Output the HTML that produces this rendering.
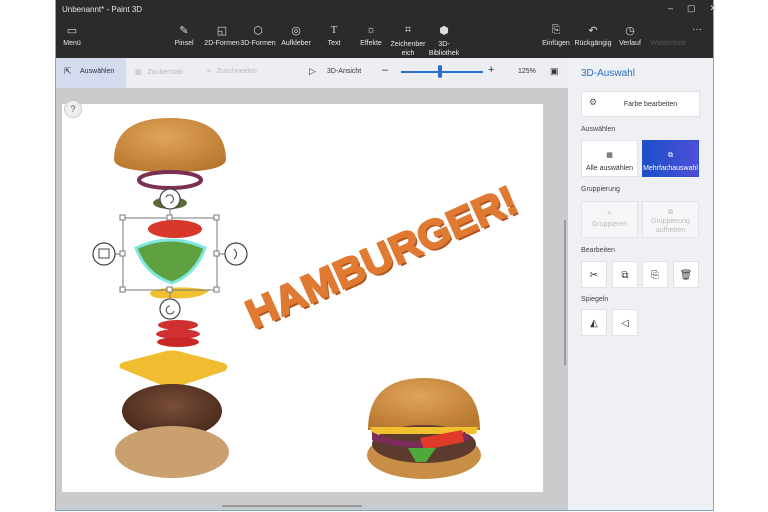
<!DOCTYPE html>
<html><head><meta charset="utf-8"><style>
*{margin:0;padding:0;box-sizing:border-box}
body{width:768px;height:512px;background:#fff;position:relative;overflow:hidden;font-family:"Liberation Sans",sans-serif}
.a{position:absolute}
.t{color:#e8e8e8;font-size:7px;text-align:center}
.ic{color:#ddd;font-size:11px;text-align:center}
.pb{position:absolute;background:#fff;border:1px solid #e2e2e6;font-size:7px;color:#333;text-align:center}
.dis{color:#bbb;background:#f6f6f8}
.lbl{position:absolute;font-size:7px;color:#444;left:581px}
</style></head><body>
<div class="a" style="left:55px;top:0;width:659px;height:511px;border:1px solid #7aa9c9;background:#c9cbcc"></div>
<div class="a" style="left:56px;top:0;width:657px;height:58px;background:#2b2b2b"></div>
<div class="a" style="left:62px;top:5px;color:#e6e6e6;font-size:8px">Unbenannt* - Paint 3D</div>
<div class="a" style="left:668px;top:3px;color:#ddd;font-size:9px;letter-spacing:14px">–▢✕</div>
<div class="a ic" style="left:62px;top:24px;width:20px">▭</div><div class="a t" style="left:60px;top:40px;width:24px">Menü</div>
<div class="a ic" style="left:174px;top:24px;width:20px">✎</div><div class="a t" style="left:170px;top:40px;width:28px">Pinsel</div>
<div class="a ic" style="left:212px;top:24px;width:20px">◱</div><div class="a t" style="left:202px;top:40px;width:40px">2D-Formen</div>
<div class="a ic" style="left:248px;top:24px;width:20px">⬡</div><div class="a t" style="left:238px;top:40px;width:40px">3D-Formen</div>
<div class="a ic" style="left:286px;top:24px;width:20px">◎</div><div class="a t" style="left:279px;top:40px;width:34px">Aufkleber</div>
<div class="a ic" style="left:324px;top:24px;width:20px;font-family:'Liberation Serif'">T</div><div class="a t" style="left:322px;top:40px;width:24px">Text</div>
<div class="a ic" style="left:361px;top:24px;width:20px">☼</div><div class="a t" style="left:357px;top:40px;width:28px">Effekte</div>
<div class="a ic" style="left:398px;top:24px;width:20px">⌗</div><div class="a t" style="left:388px;top:40px;width:40px;line-height:9px">Zeichenber<br>eich</div>
<div class="a ic" style="left:434px;top:24px;width:20px">⬢</div><div class="a t" style="left:426px;top:40px;width:36px;line-height:9px">3D-<br>Bibliothek</div>
<div class="a ic" style="left:546px;top:24px;width:20px">⎘</div><div class="a t" style="left:540px;top:40px;width:32px">Einfügen</div>
<div class="a ic" style="left:583px;top:24px;width:20px">↶</div><div class="a t" style="left:573px;top:40px;width:40px">Rückgängig</div>
<div class="a ic" style="left:620px;top:24px;width:20px">◷</div><div class="a t" style="left:614px;top:40px;width:32px">Verlauf</div>
<div class="a t" style="left:648px;top:40px;width:40px;color:#555">Wiederhole</div>
<div class="a" style="left:692px;top:24px;color:#ddd;font-size:10px">···</div>
<div class="a" style="left:56px;top:58px;width:512px;height:30px;background:#eceef2"></div>
<div class="a" style="left:56px;top:58px;width:70px;height:30px;background:#d4dbef"></div>
<div class="a" style="left:64px;top:66px;font-size:9px;color:#333">⇱</div>
<div class="a" style="left:80px;top:68px;font-size:7px;color:#234">Auswählen</div>
<div class="a" style="left:135px;top:68px;font-size:7px;color:#bbb">▦ &nbsp; Zauberstab</div>
<div class="a" style="left:207px;top:68px;font-size:7px;color:#bbb">⌗ &nbsp; Zuschneiden</div>
<div class="a" style="left:309px;top:66px;font-size:9px;color:#333">▷</div>
<div class="a" style="left:327px;top:68px;font-size:7px;color:#333">3D-Ansicht</div>
<div class="a" style="left:382px;top:64px;font-size:11px;color:#333">–</div>
<div class="a" style="left:401px;top:71px;width:82px;height:2px;background:#2d6fcf"></div>
<div class="a" style="left:438px;top:65px;width:4px;height:13px;border-radius:2px;background:#2d6fcf"></div>
<div class="a" style="left:488px;top:64px;font-size:11px;color:#333">+</div>
<div class="a" style="left:518px;top:68px;font-size:7px;color:#333">125%</div>
<div class="a" style="left:550px;top:66px;font-size:9px;color:#333">▣</div>
<div class="a" style="left:568px;top:58px;width:145px;height:452px;background:#eff0f4"></div>
<div class="a" style="left:581px;top:68px;font-size:10px;color:#2a6fc0">3D-Auswahl</div>
<div class="pb" style="left:581px;top:91px;width:119px;height:26px;line-height:26px;padding-left:20px">Farbe bearbeiten</div>
<div class="a" style="left:589px;top:97px;font-size:9px;color:#555">⚙</div>
<div class="lbl" style="top:126px">Auswählen</div>
<div class="pb" style="left:581px;top:140px;width:57px;height:37px;padding-top:8px;line-height:13px">▦<br>Alle auswählen</div>
<div class="pb" style="left:642px;top:140px;width:57px;height:37px;padding-top:8px;line-height:13px;background:linear-gradient(90deg,#1b4fc8,#4e4fd8);color:#fff;border-color:#2d4fd0">⧉<br>Mehrfachauswahl</div>
<div class="lbl" style="top:186px">Gruppierung</div>
<div class="pb dis" style="left:581px;top:201px;width:57px;height:37px;padding-top:6px;line-height:11px">⌗<br>Gruppieren</div>
<div class="pb dis" style="left:642px;top:201px;width:57px;height:37px;padding-top:6px;line-height:9px">⧉<br>Gruppierung<br>aufheben</div>
<div class="lbl" style="top:247px">Bearbeiten</div>
<div class="pb" style="left:581px;top:261px;width:26px;height:27px;line-height:27px;font-size:10px">✂</div>
<div class="pb" style="left:612px;top:261px;width:26px;height:27px;line-height:27px;font-size:10px">⧉</div>
<div class="pb" style="left:642px;top:261px;width:26px;height:27px;line-height:27px;font-size:10px">⎘</div>
<div class="pb" style="left:673px;top:261px;width:26px;height:27px;line-height:27px;font-size:10px">🗑</div>
<div class="lbl" style="top:296px">Spiegeln</div>
<div class="pb" style="left:581px;top:309px;width:26px;height:27px;line-height:27px;font-size:10px">◭</div>
<div class="pb" style="left:612px;top:309px;width:26px;height:27px;line-height:27px;font-size:10px">◁</div>
<div class="a" style="left:62px;top:104px;width:481px;height:388px;background:#fff"></div>
<div class="a" style="left:564px;top:220px;width:2px;height:145px;background:#999"></div>
<div class="a" style="left:222px;top:505px;width:140px;height:2px;background:#999"></div>
<div class="a" style="left:64px;top:100px;width:18px;height:18px;border-radius:9px;background:#eee;border:1px solid #ccc;font-size:9px;color:#555;text-align:center;line-height:16px">?</div>
<svg class="a" style="left:0;top:0" width="768" height="512">
<defs>
<radialGradient id="bun" cx="0.45" cy="0.35" r="0.7"><stop offset="0" stop-color="#e0a55a"/><stop offset="1" stop-color="#b8772e"/></radialGradient>
<radialGradient id="pat" cx="0.5" cy="0.4" r="0.7"><stop offset="0" stop-color="#7a4d38"/><stop offset="1" stop-color="#3f2418"/></radialGradient>
</defs>
<path d="M114 160 Q114 118 170 118 Q226 118 226 160 Q224 172 170 172 Q116 172 114 160Z" fill="url(#bun)"/>
<ellipse cx="170" cy="180" rx="31" ry="8" fill="none" stroke="#7a3050" stroke-width="4"/>
<ellipse cx="170" cy="203" rx="17" ry="6" fill="#5a6a32"/>
<ellipse cx="175" cy="229" rx="27" ry="9" fill="#d8382a"/>
<path d="M136 248 Q170 232 205 248 Q195 275 172 283 Q146 275 136 248Z" fill="#5fa040" stroke="#7ee8e0" stroke-width="3"/>
<path d="M150 292 Q170 284 210 290 Q200 300 170 298 Q150 300 150 292Z" fill="#f0c030"/>
<ellipse cx="178" cy="325" rx="20" ry="5" fill="#d03030"/><ellipse cx="178" cy="334" rx="22" ry="5" fill="#d03030"/><ellipse cx="178" cy="342" rx="21" ry="5" fill="#c82828"/>
<path d="M120 368 Q118 364 124 362 L166 351 Q172 350 178 351 L224 363 Q230 366 225 371 L180 386 Q172 389 164 386Z" fill="#f0bc30"/>
<ellipse cx="172" cy="411" rx="50" ry="27" fill="url(#pat)"/>
<ellipse cx="172" cy="452" rx="57" ry="26" fill="#caa070"/>
<path d="M368 430 Q368 378 424 378 Q480 378 480 430Z" fill="url(#bun)"/>
<ellipse cx="424" cy="455" rx="57" ry="24" fill="#c98e45"/>
<ellipse cx="424" cy="444" rx="52" ry="19" fill="#5d3a2e"/>
<path d="M370 427 L478 427 L476 434 L372 434Z" fill="#f0c030"/>
<path d="M372 432 Q400 445 425 440 L465 432 L470 440 L425 448 Q395 448 372 440Z" fill="#7b2c5a"/>
<path d="M420 438 L462 430 L464 442 L424 450Z" fill="#e03a2a"/>
<path d="M408 448 L436 448 L426 462 L416 462Z" fill="#50a838"/>
<g fill="none" stroke="#777" stroke-width="1">
<rect x="123" y="218" width="94" height="72"/>
<line x1="170" y1="210" x2="170" y2="218"/><line x1="113" y1="254" x2="123" y2="254"/><line x1="217" y1="254" x2="226" y2="254"/><line x1="170" y1="290" x2="170" y2="298"/>
</g>
<g fill="#fff" stroke="#777"><rect x="120" y="215" width="5" height="5"/><rect x="167" y="215" width="5" height="5"/><rect x="214" y="215" width="5" height="5"/><rect x="120" y="251" width="5" height="5"/><rect x="214" y="251" width="5" height="5"/><rect x="120" y="287" width="5" height="5"/><rect x="167" y="287" width="5" height="5"/><rect x="214" y="287" width="5" height="5"/></g>
<g fill="#fff" stroke="#444" stroke-width="1.2"><circle cx="170" cy="199" r="10"/><circle cx="104" cy="254" r="11"/><circle cx="236" cy="254" r="11"/><circle cx="170" cy="309" r="10"/></g>
<g fill="none" stroke="#444" stroke-width="1"><path d="M166 197 a4 4 0 1 1 4 6"/><rect x="99" y="249" width="10" height="9"/><path d="M234 249 q5 5 0 10"/><path d="M174 311 a4 4 0 1 1 -4 -5"/></g>
</svg>
<div class="a" style="left:382px;top:258px;transform:translate(-50%,-50%) rotate(-24deg) scaleX(1.05);font-size:40px;font-weight:bold;color:#e07a32;white-space:nowrap;text-shadow:1px 3px 0 #b0541c;-webkit-text-stroke:2px #e07a32">HAMBURGER!</div>
</body></html>
